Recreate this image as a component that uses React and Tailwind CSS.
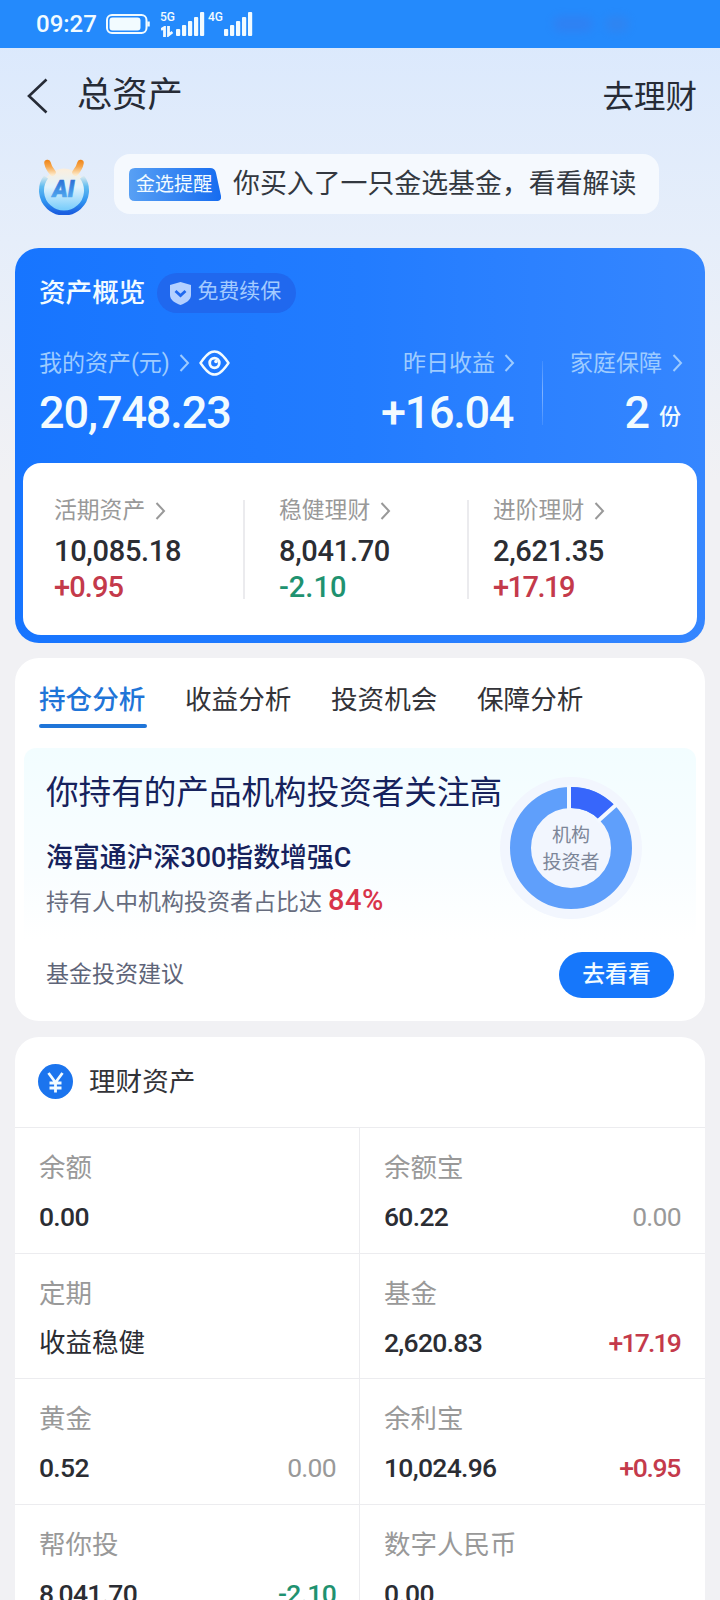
import { clsx } from 'clsx';

const summary = [
    { label: '活期资产', value: '10,085.18', change: '+0.95' },
    { label: '稳健理财', value: '8,041.70', change: '-2.10' },
    { label: '进阶理财', value: '2,621.35', change: '+17.19' },
];

const tabs = ['持仓分析', '收益分析', '投资机会', '保障分析'];

const holdings = [
    { label: '余额', value: '0.00' },
    { label: '余额宝', value: '60.22', change: '0.00' },
    { label: '定期', value: '收益稳健' },
    { label: '基金', value: '2,620.83', change: '+17.19' },
    { label: '黄金', value: '0.52', change: '0.00' },
    { label: '余利宝', value: '10,024.96', change: '+0.95' },
    { label: '帮你投', value: '8,041.70', change: '-2.10' },
    { label: '数字人民币', value: '0.00' },
];

const changeColor = (change) => {
    if (change.startsWith('+')) return 'text-[#c43a4b]';
    if (change.startsWith('-')) return 'text-[#1f9270]';
    return 'text-[#999999]';
};

function Chevron({ className }) {
    return (
        <svg className={clsx('h-[18px] w-[11px] shrink-0', className)} viewBox="0 0 11 18" fill="none" stroke="currentColor" strokeWidth="2">
            <path d="M1.5 1 9 9l-7.5 8" />
        </svg>
    );
}

function SignalBars() {
    return (
        <svg className="h-[24px] w-[29px]" viewBox="0 0 29 24" fill="#f2fbff">
            <rect x="0" y="17" width="4.2" height="7" rx="1" />
            <rect x="6" y="13" width="4.2" height="11" rx="1" />
            <rect x="12" y="9" width="4.2" height="15" rx="1" />
            <rect x="18" y="5" width="4.2" height="19" rx="1" />
            <rect x="24" y="0" width="4.2" height="24" rx="1" />
        </svg>
    );
}

function StatusBar() {
    return (
        <div className="flex h-12 items-center bg-[#248afc] pl-9 text-[#f2fbff]">
            <span className="w-[70px] text-[24px] leading-none font-medium">09:27</span>
            <svg className="h-[20px] w-[44px]" viewBox="0 0 44 20" fill="none">
                <rect x="1" y="1" width="39.5" height="18" rx="5" stroke="#f2fbff" strokeWidth="2" />
                <rect x="3.5" y="3.5" width="31" height="13" rx="3" fill="#f2fbff" />
                <path d="M42.5 7.5v5" stroke="#f2fbff" strokeWidth="2.5" />
            </svg>
            <div className="ml-[10px] flex h-[25px] w-[16px] flex-col justify-between">
                <span className="text-[12px] leading-[10px] font-medium">5G</span>
                <svg className="ml-[1px] h-[11px] w-[12px]" viewBox="0 0 12 11" fill="none" stroke="#f2fbff" strokeWidth="2.8">
                    <path d="M0 3.5 3.500 1.500V11M7.500 0v9l4-3" />
                </svg>
            </div>
            <SignalBars />
            <span className="mb-[15px] ml-[3px] w-[16px] text-[12px] leading-none font-medium">4G</span>
            <SignalBars />
            <div className="ml-[300px] flex gap-3 opacity-20 blur-[5px]">
                <span className="h-4 w-10 rounded-full bg-[#5a5fd0]" />
                <span className="h-4 w-6 rounded-full bg-[#5a6fc8]" />
            </div>
        </div>
    );
}

function Header() {
    return (
        <div className="flex h-[96px] items-center pr-[23px] pl-[27px] text-[#262b36]">
            <svg className="h-[36px] w-[22px]" viewBox="0 0 22 36" fill="none" stroke="currentColor" strokeWidth="2.6">
                <path d="M19.5 1.5 2 18l17.5 16.5" />
            </svg>
            <h1 className="ml-[28px] text-[35.3px] leading-none">总资产</h1>
            <span className="mt-[4px] ml-auto text-[31.5px] leading-none">去理财</span>
        </div>
    );
}

function AiLogo() {
    return (
        <svg className="h-[56px] w-[52px]" viewBox="0 0 52 56" fill="none">
            <defs>
                <linearGradient id="ring" x1="0" y1="16" x2="0" y2="54" gradientUnits="userSpaceOnUse">
                    <stop offset="0" stopColor="#e9efef" />
                    <stop offset="0.3" stopColor="#62bdf0" />
                    <stop offset="0.7" stopColor="#2e92f0" />
                    <stop offset="1" stopColor="#1b5fe0" />
                </linearGradient>
                <linearGradient id="face" x1="0" y1="10" x2="0" y2="50" gradientUnits="userSpaceOnUse">
                    <stop offset="0" stopColor="#fbeedd" />
                    <stop offset="0.45" stopColor="#e2f3fd" />
                    <stop offset="1" stopColor="#7ccefb" />
                </linearGradient>
                <linearGradient id="ear" x1="0" y1="1" x2="0" y2="16" gradientUnits="userSpaceOnUse">
                    <stop offset="0" stopColor="#ee8418" />
                    <stop offset="0.45" stopColor="#f7a84e" />
                    <stop offset="1" stopColor="#fdeacb" />
                </linearGradient>
                <linearGradient id="letters" x1="0" y1="22" x2="0" y2="38" gradientUnits="userSpaceOnUse">
                    <stop offset="0" stopColor="#2f74d8" />
                    <stop offset="1" stopColor="#4fa6ee" />
                </linearGradient>
            </defs>
            <circle cx="26" cy="31" r="21.5" fill="url(#face)" />
            <path d="M8 18a22.5 22.5 0 1 0 36 0" stroke="url(#ring)" strokeWidth="5" />
            <path d="M9.5 4q1 5 5 9.500M42.500 4q-1 5-5 9.500" stroke="url(#ear)" strokeWidth="6.5" strokeLinecap="round" />
            <text x="25.500" y="38" textAnchor="middle" fontSize="23" fontWeight="900" fontStyle="italic" fill="url(#letters)" stroke="url(#letters)" strokeWidth="0.6">AI</text>
        </svg>
    );
}

function AiTip() {
    return (
        <div className="flex h-[104px] items-start pt-[10px] pl-[38px]">
            <div className="pt-[5px]"><AiLogo /></div>
            <div className="ml-6 flex h-[60px] w-[545px] items-center rounded-2xl bg-[#f5f9fe] pl-[15px]">
                <svg className="h-[33px] w-[92px]" viewBox="0 0 92 33">
                    <defs>
                        <linearGradient id="tag">
                            <stop offset="0" stopColor="#58a0f4" />
                            <stop offset="1" stopColor="#166cf0" />
                        </linearGradient>
                    </defs>
                    <path d="M6 0h75q5 0 6 5l5 23q1 5-5 5H6q-6 0-6-6V6q0-6 6-6z" fill="url(#tag)" />
                    <text x="45" y="23" textAnchor="middle" fontSize="19.2" fill="#f2fbff">金选提醒</text>
                </svg>
                <span className="mt-[1px] ml-3 text-[26.9px] leading-none whitespace-nowrap text-[#333840]">你买入了一只金选基金，看看解读</span>
            </div>
        </div>
    );
}

function AssetOverview() {
    return (
        <section className="mx-[15px] h-[395px] rounded-3xl bg-gradient-to-r from-[#1775ff] via-[#227cff] to-[#3586ff] px-2 pt-[25px] pb-2">
            <div className="flex h-10 items-center pl-4">
                <h2 className="text-[26.6px] leading-none font-medium text-[#f2fbff]">资产概览</h2>
                <div className="ml-3 flex h-10 w-[139px] items-center rounded-full bg-[#2068ee] pl-[13px] text-[#a3cbff]">
                    <svg className="h-[23px] w-[21px]" viewBox="0 0 21 23">
                        <path d="M10.5 0 21 3V13c0 5-5 8-10.5 10C5 21 0 18 0 13V3z" fill="#b4d0ff" />
                        <path d="m5.5 9 5 4.5 5-4.5" fill="none" stroke="#2068ee" strokeWidth="2.8" />
                    </svg>
                    <span className="mb-[3px] ml-[6px] text-[21px] leading-none">免费续保</span>
                </div>
            </div>
            <div className="mt-[34px] flex h-[116px] pl-4 text-[#9dcbff]">
                <div>
                    <div className="flex h-8 items-center">
                        <span className="text-[23px] leading-none">我的资产(元)</span>
                        <Chevron className="ml-[9px]" />
                        <svg className="ml-[9px] h-[26px] w-[31px]" viewBox="0 0 31 26" fill="none" stroke="#f2fbff" strokeWidth="2.4">
                            <path d="M1.5 13Q8 3.5 12.5 2q3-1 6 0Q23 3.5 29.5 13 23 22.5 18.5 24q-3 1-6 0Q8 22.5 1.5 13z" strokeLinejoin="round" />
                            <circle cx="15.5" cy="13" r="4.8" strokeWidth="2.8" />
                            <circle cx="17" cy="11.5" r="1.8" fill="#f2fbff" stroke="none" />
                        </svg>
                    </div>
                    <div className="mt-[10px] text-[45px] leading-[48px] font-medium tracking-[-1.1px] text-[#f2fbff]">20,748.23</div>
                </div>
                <div className="ml-auto flex flex-col items-end">
                    <div className="flex h-8 items-center">
                        <span className="text-[23px] leading-none">昨日收益</span>
                        <Chevron className="-mr-[2px] ml-[9px]" />
                    </div>
                    <div className="mt-[10px] text-[45px] leading-[48px] font-medium tracking-[-1.3px] text-[#f2fbff]">+16.04</div>
                </div>
                <div className="mt-[14px] ml-[29px] h-[64px] w-px bg-gradient-to-b from-white/10 via-white/40 to-white/10" />
                <div className="mr-[14px] ml-[27px] flex flex-col items-end">
                    <div className="flex h-8 items-center">
                        <span className="text-[23px] leading-none">家庭保障</span>
                        <Chevron className="ml-[10px]" />
                    </div>
                    <div className="mt-[10px] flex items-center text-[45px] leading-[48px] font-medium text-[#f2fbff]">
                        2<span className="mt-[8px] mr-[2px] ml-[9px] text-[22px] leading-none">份</span>
                    </div>
                </div>
            </div>
            <div className="flex h-[172px] rounded-[18px] bg-white pt-[33px] pl-[31px]">
                {summary.map((item, i) => (
                    <div key={item.label} className={clsx('flex', i === 0 && 'w-[225px]', i === 1 && 'w-[214px]')}>
                        <div>
                            <div className="flex h-7 items-center text-[#999999]">
                                <span className="mt-[2px] text-[22.8px] leading-none whitespace-nowrap">{item.label}</span>
                                <Chevron className="mt-[2px] ml-[10px]" />
                            </div>
                            <div className="mt-[9px] text-[29px] leading-9 font-medium tracking-[-0.3px] text-[#2b2d33]">{item.value}</div>
                            <div className={clsx('text-[29px] leading-9 font-medium', item.change === '+17.19' ? 'tracking-[-1.5px]' : item.change === '-2.10' ? 'tracking-normal' : 'tracking-[-0.9px]', changeColor(item.change))}>{item.change}</div>
                        </div>
                        {i < 2 && <div className={clsx('mt-1 ml-auto h-[99px] w-[2px] bg-[#ebebee]', i === 0 ? 'mr-[34px]' : 'mr-[24px]')} />}
                    </div>
                ))}
            </div>
        </section>
    );
}

function InvestorDonut() {
    return (
        <svg className="h-[144px] w-[144px]" viewBox="-72 -72 144 144" fill="none">
            <circle r="71" fill="#f2f6fe" />
            <circle r="50.5" stroke="#5f9ffb" strokeWidth="21" />
            <path d="M0-50.5A50.5 50.5 0 0 1 36.3-35.1" stroke="#3766fb" strokeWidth="21" />
            <path d="M-2-63v25M26.5-26.5 46-44" stroke="#f4f9ff" strokeWidth="4" />
            <text y="-6" textAnchor="middle" fontSize="19" fill="#7d8698">机构</text>
            <text y="21" textAnchor="middle" fontSize="19" fill="#7d8698">投资者</text>
        </svg>
    );
}

function Analysis() {
    return (
        <section className="mx-[15px] mt-[15px] h-[363px] rounded-3xl bg-white pt-[23px]">
            <div className="flex gap-[38px] pl-6">
                {tabs.map((tab, i) => (
                    <div key={tab} className={clsx('flex h-[47px] w-[108px] flex-col justify-between pt-[1px]', i === 0 ? 'font-medium text-[#1f75d8]' : 'text-[#333338]')}>
                        <span className="text-[26.6px] leading-[36px]">{tab}</span>
                        {i === 0 && <span className="h-1 rounded-full bg-[#1f75d8]" />}
                    </div>
                ))}
            </div>
            <div className="mx-[9px] mt-[20px] flex h-[255px] flex-col rounded-xl bg-gradient-to-b from-[#f2fdff] via-[#f9fdff] via-50% to-white to-75% pl-[22px]">
                <div className="flex">
                    <div className="w-[456px] pt-[25px] whitespace-nowrap">
                        <h3 className="h-[42px] text-[32.6px] leading-[40px] text-[#16225c]">你持有的产品机构投资者关注高</h3>
                        <p className="mt-[25px] text-[26.9px] leading-[36px] font-medium text-[#16225c]">海富通沪深300指数增强C</p>
                        <p className="mt-[8px] flex h-[36px] items-center text-[23px] leading-none text-[#666c7e]">
                            持有人中机构投资者占比达
                            <span className="mb-[3px] ml-[6px] text-[29px] font-medium tracking-[0.5px] text-[#d8344a]">84%</span>
                        </p>
                    </div>
                    <div className="-ml-[3px] pt-[28px]"><InvestorDonut /></div>
                </div>
                <div className="mt-auto mb-[5px] flex items-center justify-between pr-[22px]">
                    <span className="mb-[2px] text-[23px] leading-none text-[#5e6478]">基金投资建议</span>
                    <button className="h-[46px] w-[115px] rounded-full bg-[#1677fb] text-[22.8px] leading-none font-medium text-[#f2fbff]">去看看</button>
                </div>
            </div>
        </section>
    );
}

function Holdings() {
    return (
        <section className="mx-[15px] mt-4 rounded-t-3xl bg-white">
            <div className="flex h-[90px] items-center pl-[23px]">
                <svg className="mb-[2px] h-[35px] w-[35px]" viewBox="0 0 35 35" fill="none">
                    <circle cx="17.5" cy="17.5" r="17.5" fill="#1b74ee" />
                    <path d="m10.5 9 7 9.5 7-9.5M17.5 18v10.5M11.5 19h12M11.5 24h12" stroke="#f2fbff" strokeWidth="2.8" />
                </svg>
                <h2 className="ml-4 text-[26.6px] leading-none text-[#333338]">理财资产</h2>
            </div>
            <div className="grid grid-cols-2">
                {holdings.map((item, i) => (
                    <div key={item.label} className={clsx('h-[125.7px] border-t border-[#ececef] pt-[24px]', i % 2 === 0 ? 'border-r pr-[23px] pl-6' : 'pr-6 pl-[24px]')}>
                        <div className="text-[26.5px] leading-[32px] text-[#999999]">{item.label}</div>
                        <div className="mt-[16px] flex items-center justify-between text-[26.5px] leading-[34px] tracking-[-0.7px]">
                            <span className={clsx('text-[#2b2d33]', item.value === '收益稳健' ? 'tracking-normal' : 'font-medium')}>{item.value}</span>
                            {item.change && <span className={clsx(item.change !== '0.00' && 'font-medium', item.change === '+17.19' && 'mr-px tracking-[-1.8px]', item.change === '+0.95' && 'mr-px tracking-[-1.3px]', changeColor(item.change))}>{item.change}</span>}
                        </div>
                    </div>
                ))}
            </div>
        </section>
    );
}

export default function App() {
    return (
        <div className="h-[1600px] w-[720px] overflow-hidden bg-[#f1f1f4] bg-gradient-to-b from-[#d9e8fd] via-[#e6eefa] via-15% to-[#f1f1f4] to-30% font-['Roboto','Noto_Sans_CJK_SC',sans-serif]">
            <StatusBar />
            <Header />
            <AiTip />
            <AssetOverview />
            <Analysis />
            <Holdings />
        </div>
    );
}
